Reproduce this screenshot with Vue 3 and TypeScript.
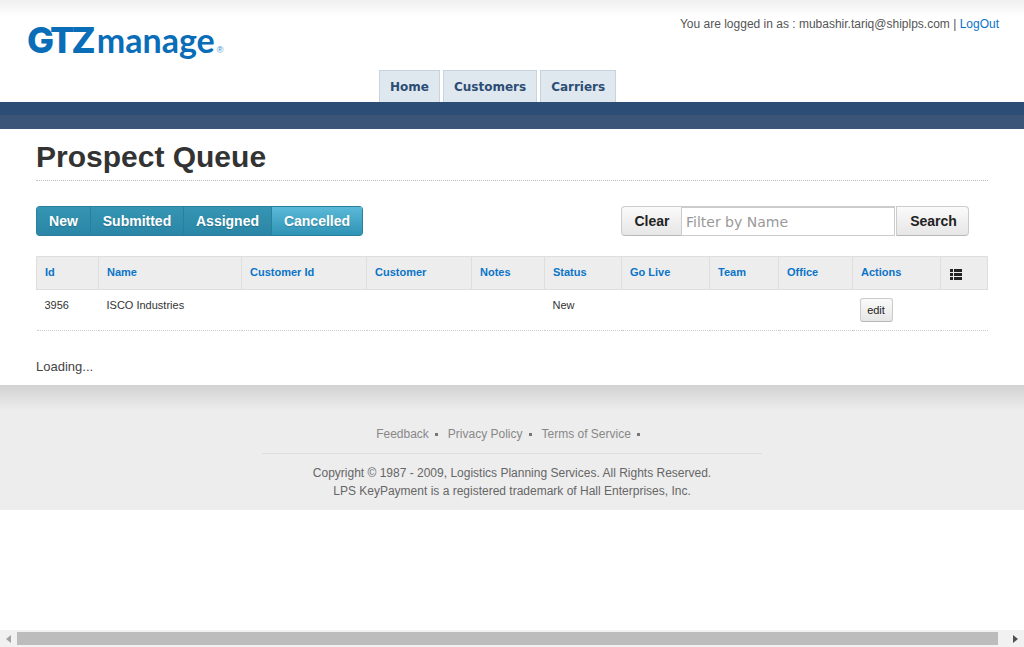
<script setup lang="ts">
const tabs = ['Home', 'Customers', 'Carriers'];

const statusButtons = [
  { label: 'New', active: false },
  { label: 'Submitted', active: false },
  { label: 'Assigned', active: false },
  { label: 'Cancelled', active: true },
];

const columns = [
  { label: 'Id', width: 62 },
  { label: 'Name', width: 143 },
  { label: 'Customer Id', width: 125 },
  { label: 'Customer', width: 105 },
  { label: 'Notes', width: 73 },
  { label: 'Status', width: 77 },
  { label: 'Go Live', width: 88 },
  { label: 'Team', width: 69 },
  { label: 'Office', width: 74 },
  { label: 'Actions', width: 88 },
];

const footerLinks = ['Feedback', 'Privacy Policy', 'Terms of Service'];
</script>

<template>
  <div class="page">
    <header class="header">
      <div class="header-top">
        <div class="logo">
          <span class="logo-gtz">GTZ</span><span class="logo-manage">manage</span><span class="logo-reg">®</span>
        </div>
        <div class="login-info">
          You are logged in as : mubashir.tariq@shiplps.com | <a class="logout">LogOut</a>
        </div>
      </div>
      <nav class="tabs">
        <a v-for="tab in tabs" :key="tab" class="tab">{{ tab }}</a>
      </nav>
    </header>
    <div class="band"></div>

    <main class="content">
      <h1 class="title">Prospect Queue</h1>

      <div class="toolbar">
        <div class="status-group">
          <button
            v-for="btn in statusButtons"
            :key="btn.label"
            class="status-btn"
            :class="{ active: btn.active }"
          >
            {{ btn.label }}
          </button>
        </div>
        <div class="search">
          <button class="plain-btn clear-btn">Clear</button>
          <input class="search-input" type="text" placeholder="Filter by Name" />
          <button class="plain-btn search-btn">Search</button>
        </div>
      </div>

      <table class="grid">
        <thead>
          <tr>
            <th v-for="col in columns" :key="col.label" :style="{ width: col.width + 'px' }">
              {{ col.label }}
            </th>
            <th class="icon-col">
              <svg width="12" height="11" viewBox="0 0 12 11" class="list-icon">
                <rect x="0" y="0" width="3" height="3" />
                <rect x="4" y="0" width="8" height="3" />
                <rect x="0" y="4" width="3" height="3" />
                <rect x="4" y="4" width="8" height="3" />
                <rect x="0" y="8" width="3" height="3" />
                <rect x="4" y="8" width="8" height="3" />
              </svg>
            </th>
          </tr>
        </thead>
        <tbody>
          <tr>
            <td>3956</td>
            <td>ISCO Industries</td>
            <td></td>
            <td></td>
            <td></td>
            <td>New</td>
            <td></td>
            <td></td>
            <td></td>
            <td class="action-cell"><button class="edit-btn">edit</button></td>
            <td></td>
          </tr>
        </tbody>
      </table>

      <div class="loading">Loading...</div>
    </main>

    <footer class="footer">
      <div class="footer-links">
        <span v-for="link in footerLinks" :key="link" class="footer-link">
          <a>{{ link }}</a><i class="bullet"></i>
        </span>
      </div>
      <div class="footer-rule"></div>
      <p class="copyright">Copyright © 1987 - 2009, Logistics Planning Services. All Rights Reserved.</p>
      <p class="copyright">LPS KeyPayment is a registered trademark of Hall Enterprises, Inc.</p>
    </footer>

    <!-- horizontal scrollbar of the window -->
    <div class="scrollbar">
      <span class="arrow arrow-left"></span>
      <span class="thumb"></span>
      <span class="arrow arrow-right"></span>
    </div>
  </div>
</template>

<style>
html,
body {
  margin: 0;
  background: #fff;
  overflow: hidden;
}
</style>

<style scoped>
.page {
  position: relative;
  width: 1024px;
  height: 647px;
  overflow: hidden;
  font-family: 'Liberation Sans', Arial, sans-serif;
  color: #333;
}

.header {
  height: 102px;
  display: flex;
  flex-direction: column;
  background: linear-gradient(#f0f0f0 0, #fff 16px);
}

.header-top {
  height: 70px;
  flex: none;
  display: flex;
  justify-content: space-between;
  align-items: flex-start;
  padding: 0 25px 0 27px;
}

.logo {
  margin-top: 20px;
  display: flex;
  align-items: baseline;
  color: #0a6db7;
  line-height: 40px;
  white-space: nowrap;
}

.logo-gtz {
  font-family: 'Inter', 'Liberation Sans', sans-serif;
  font-size: 36px;
  font-weight: 800;
  letter-spacing: -3px;
}

.logo-manage {
  margin-left: 4px;
  font-family: 'Lato', 'Liberation Sans', sans-serif;
  font-size: 34px;
  font-weight: 700;
}

.logo-reg {
  margin-left: 2px;
  font-size: 9px;
  color: #3f8ccb;
}

.login-info {
  margin-top: 17px;
  font-size: 12px;
  line-height: 14px;
  color: #555;
}

.logout {
  color: #0a74c8;
}

.tabs {
  display: flex;
  gap: 3px;
  padding-left: 379px;
}

.tab {
  height: 31px;
  padding: 0 10px;
  display: flex;
  align-items: center;
  background: #dfe7ef;
  border: 1px solid #c9d3de;
  border-bottom: none;
  font-family: 'DejaVu Sans', sans-serif;
  font-size: 12px;
  font-weight: 700;
  color: #2c4d75;
}

.band {
  height: 27px;
  background: linear-gradient(#2c4d75 0, #2c4d75 13px, #3a5577 13px, #3a5577 100%);
}

.content {
  height: 256px;
  padding: 0 36px;
  box-sizing: border-box;
}

.title {
  margin: 0;
  height: 52px;
  border-bottom: 1px dotted #bbb;
  box-sizing: border-box;
  font-size: 30px;
  font-weight: 700;
  line-height: 56px;
  color: #333;
}

.toolbar {
  margin-top: 25px;
  height: 30px;
  display: flex;
  justify-content: space-between;
  padding-right: 19px;
}

.status-group {
  display: grid;
  grid-template-columns: 55px 93px 88px 91px;
  border-radius: 4px;
  overflow: hidden;
}

.status-btn {
  padding: 0;
  border: 1px solid #2a7f9e;
  border-left: none;
  background: linear-gradient(#3595b3, #2b86a6);
  font-family: inherit;
  font-size: 14px;
  font-weight: 700;
  color: #fff;
  text-shadow: 0 1px 1px rgba(0, 0, 0, 0.2);
}

.status-btn:first-child {
  border-left: 1px solid #2a7f9e;
}

.status-btn.active {
  background: linear-gradient(#5bb9d8, #2f93b5);
}

.search {
  display: flex;
}

.plain-btn {
  padding: 0;
  border: 1px solid #ccc;
  border-bottom-color: #b8b8b8;
  background: linear-gradient(#fafafa, #e6e6e6);
  font-family: inherit;
  font-size: 14px;
  font-weight: 700;
  color: #222;
}

.clear-btn {
  width: 60px;
  padding-left: 1px;
  border-right: none;
  border-radius: 4px 0 0 4px;
}

.search-input {
  width: 214px;
  height: 30px;
  box-sizing: border-box;
  padding: 0 4px;
  border: 1px solid #ccc;
  border-top-width: 2px;
  outline: none;
  font-family: 'DejaVu Sans', sans-serif;
  font-size: 14px;
}

.search-input::placeholder {
  color: #999;
}

.search-btn {
  width: 73px;
  margin-left: 1px;
  padding-left: 2px;
  border-radius: 0 4px 4px 0;
}

.grid {
  margin-top: 20px;
  width: 952px;
  table-layout: fixed;
  border-collapse: collapse;
  font-size: 11px;
}

.grid th {
  height: 33px;
  padding: 0 8px 2px;
  box-sizing: border-box;
  background: #ededed;
  border: 1px solid #dedede;
  text-align: left;
  font-weight: 700;
  color: #0a74c8;
}

.grid .icon-col {
  padding: 3px 8px 0 9px;
}

.list-icon {
  display: block;
  fill: #222;
}

.grid td {
  height: 41px;
  padding: 0 8px 11px;
  box-sizing: border-box;
  border-bottom: 1px dotted #ccc;
  color: #333;
}

.grid .action-cell {
  padding: 0 0 1px 7px;
}

.edit-btn {
  display: block;
  width: 33px;
  height: 24px;
  padding: 0;
  border: 1px solid #ccc;
  border-bottom-color: #b8b8b8;
  border-radius: 3px;
  background: linear-gradient(#fafafa, #e6e6e6);
  font-family: inherit;
  font-size: 11px;
  color: #222;
}

.loading {
  margin-top: 28px;
  font-size: 13px;
  line-height: 16px;
  color: #444;
}

.footer {
  height: 125px;
  padding-top: 40px;
  box-sizing: border-box;
  background: linear-gradient(#d2d2d2 0, #ededed 26px);
  text-align: center;
  font-size: 12px;
  color: #666;
}

.footer-links {
  height: 19px;
  line-height: 19px;
  padding-left: 2px;
  color: #888;
}

.footer-link {
  margin-right: 6px;
}

.bullet {
  display: inline-block;
  width: 3px;
  height: 3px;
  margin: 0 4px 2px 6px;
  background: #777;
}

.footer-rule {
  width: 500px;
  margin: 9px auto 10px;
  border-top: 1px solid #ddd;
}

.copyright {
  margin: 0;
  line-height: 18px;
}

.scrollbar {
  position: absolute;
  left: 0;
  right: 0;
  bottom: 0;
  height: 17px;
  display: flex;
  align-items: center;
  background: #f1f1f1;
}

.thumb {
  flex: 1;
  height: 13px;
  margin-right: 9px;
  background: #bcbcbc;
}

.arrow {
  width: 17px;
  height: 17px;
  display: flex;
  align-items: center;
  justify-content: center;
}

.arrow::before {
  content: '';
  border-top: 4px solid transparent;
  border-bottom: 4px solid transparent;
}

.arrow-left::before {
  border-right: 5px solid #a3a3a3;
}

.arrow-right::before {
  border-left: 5px solid #505050;
}
</style>
